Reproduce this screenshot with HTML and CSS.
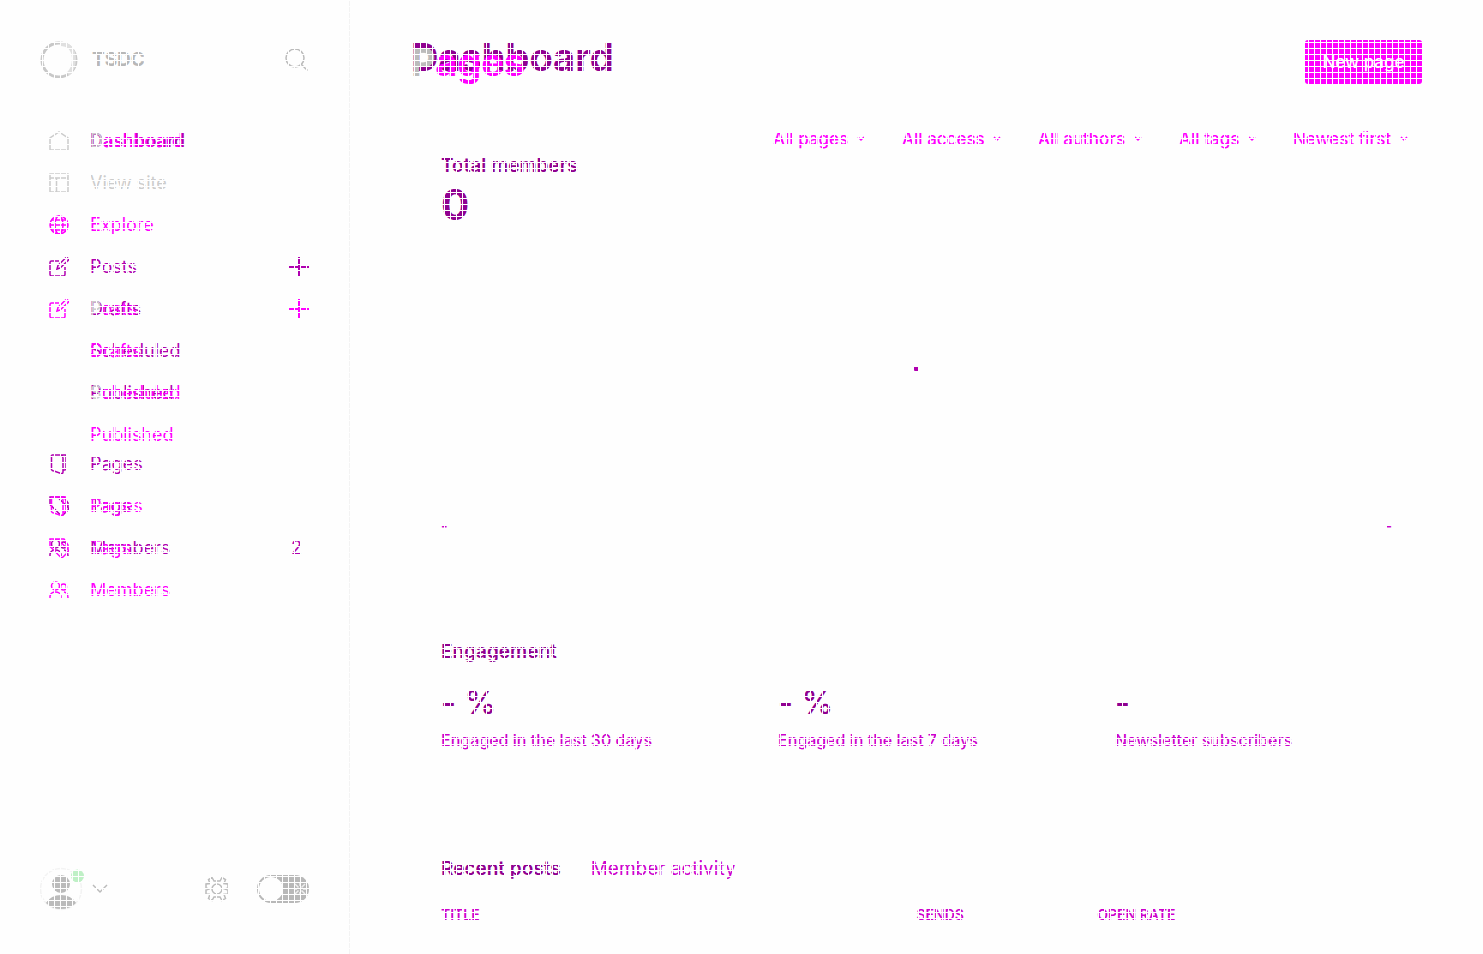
FILE: index.html
```html
<!DOCTYPE html>
<html lang="en">
<head>
<meta charset="utf-8">
<title>TSDC</title>
<link rel="stylesheet" href="styles.css">
</head>
<body>
<svg class="sprite" aria-hidden="true">
  <symbol id="i-posts" viewBox="0 0 20 20"><path d="M10 4H2.500Q1 4 1 5.500V17.500Q1 19 2.500 19H14.500Q16 19 16 17.500V10M8 12l1-3.500L16.500 1Q18 0 19 1.500T18.500 4L11 11z"/></symbol>
  <symbol id="i-plus" viewBox="0 0 20 20"><path d="M10 0V20M0 10H20" stroke-width="2"/></symbol>
  <symbol id="i-pages" viewBox="0 0 20 20"><path d="M2.500 1H17M2.500 1V15.500Q3 17 5 17L12 19.500Q14 20 14 18V4Q14 2 12 1M14 16h1.500Q17 16 17 14.500V1"/></symbol>
  <symbol id="i-tags" viewBox="0 0 20 20"><path d="M1 1H8.500L19 11.500Q20 13 19 14L14 19Q13 20 11.500 19L1 8.500zM5 1H15L19 7V11"/></symbol>
  <symbol id="i-members" viewBox="0 0 20 20"><path d="M1 18V16Q2 12 6.500 12T12 16V18M15 12Q19 12.500 19 18"/><circle cx="6.500" cy="6" r="4"/><circle cx="14.500" cy="7" r="3"/></symbol>
  <symbol id="i-chevron" viewBox="0 0 8 6"><path d="M1 1l3 3 3-3"/></symbol>
</svg>
<div class="app">
  <aside class="sidebar">
    <div class="brand">
      <svg class="logo" viewBox="0 0 38 38" aria-hidden="true"><circle cx="19" cy="19" r="17" stroke="#c8c8c8" stroke-width="3"/><path d="M20 3Q33 3 34 17Q34 28 28 33" stroke="#e0e0e0" stroke-width="4"/></svg>
      <span class="brand-name">TSDC</span>
      <button class="icon-button" aria-label="Search"><svg width="24" height="24" viewBox="0 0 24 24"><circle cx="10" cy="10" r="9"/><path d="M16.500 16.500l6 6"/></svg></button>
    </div>
    <div class="nav-stack">
      <nav class="nav nav-home" aria-label="Dashboard view">
        <ul class="group">
          <li><a class="item muted" href="#"><svg class="icon" viewBox="0 0 20 20"><path d="M1 19V7L10 1l9 6V19z"/></svg><span class="label current">Dashboard</span></a></li>
          <li><a class="item muted" href="#"><svg class="icon" viewBox="0 0 20 20"><path d="M1 1h18v18H1zM1 5h18M7.500 5V19"/></svg><span class="label">View site</span></a></li>
        </ul>
        <ul class="group">
          <li><a class="item" href="#"><svg class="icon"><use href="#i-posts"/></svg><span class="label">Posts</span><svg class="plus"><use href="#i-plus"/></svg></a></li>
          <li><a class="item sub" href="#"><span class="label">Drafts</span></a></li>
          <li><a class="item sub" href="#"><span class="label">Scheduled</span></a></li>
          <li><a class="item sub" href="#"><span class="label">Published</span></a></li>
        </ul>
        <ul class="group">
          <li><a class="item" href="#"><svg class="icon"><use href="#i-pages"/></svg><span class="label">Pages</span></a></li>
          <li><a class="item" href="#"><svg class="icon"><use href="#i-tags"/></svg><span class="label">Tags</span></a></li>
          <li><a class="item" href="#"><svg class="icon"><use href="#i-members"/></svg><span class="label">Members</span><span class="count">2</span></a></li>
        </ul>
      </nav>
      <nav class="nav nav-pages" aria-label="Pages view">
        <ul class="group first">
          <li><a class="item sub" href="#"><span class="label shared">Dashboard</span></a></li>
          <li class="spacer"></li>
          <li><a class="item" href="#"><svg class="icon" viewBox="0 0 20 20"><circle cx="10" cy="10" r="9"/><ellipse cx="10" cy="10" rx="4" ry="9"/><path d="M1 10h18M2.500 5h15M2.500 15h15"/></svg><span class="label">Explore</span></a></li>
        </ul>
        <ul class="group">
          <li><a class="item" href="#"><svg class="icon"><use href="#i-posts"/></svg><span class="label shared">Posts</span><svg class="plus"><use href="#i-plus"/></svg></a></li>
          <li><a class="item sub" href="#"><span class="label">Drafts</span></a></li>
          <li><a class="item sub" href="#"><span class="label shared">Scheduled</span></a></li>
          <li><a class="item sub" href="#"><span class="label">Published</span></a></li>
        </ul>
        <ul class="group">
          <li><a class="item" href="#"><svg class="icon"><use href="#i-pages"/></svg><span class="label">Pages</span></a></li>
          <li><a class="item" href="#"><svg class="icon"><use href="#i-tags"/></svg><span class="label">Tags</span></a></li>
          <li><a class="item" href="#"><svg class="icon"><use href="#i-members"/></svg><span class="label">Members</span></a></li>
        </ul>
      </nav>
    </div>
    <div class="account">
      <button class="profile" aria-label="Account menu">
        <svg width="44" height="44" viewBox="0 0 44 44"><circle cx="21" cy="22" r="20.500" stroke="#f3f3f3"/><circle cx="21" cy="17" r="9" class="solid"/><path d="M6 36Q11 28 21 28T36 36Q30 42 21 42T6 36z" class="solid"/><circle cx="37.500" cy="9" r="6.500" class="dot"/></svg>
        <svg width="16" height="10" viewBox="0 0 16 10"><path d="M1 1l7 7 7-7"/></svg>
      </button>
      <button class="icon-button" aria-label="Settings"><svg width="24" height="26" viewBox="0 0 24 26"><path d="M9 5L7 1.500 3.500 3.500 5 7.500 1 8v4l3 1-3 1v4l4 .500-1.500 4L7 24.500 9 21h6l2 3.500 3.500-2L19 18.500l4-.500v-4l-3-1 3-1V8l-4-.500 1.500-4L17 1.500 15 5z"/><circle cx="12" cy="13" r="5"/></svg></button>
      <label class="toggle"><input type="checkbox" aria-label="Night shift"><svg width="14" height="14" viewBox="0 0 14 14"><path d="M2 2l3.500 3.500M12 2L8.500 5.500M2 12l3.500-3.500M12 12L8.500 8.500M7 1v3M7 10v3M1 7h3M10 7h3"/></svg></label>
    </div>
  </aside>
  <main class="main">
    <header class="header">
      <div class="titles">
        <h1 class="title">Dashboard</h1>
        <h1 class="title title-pages">Pages</h1>
      </div>
      <button class="primary">New page</button>
    </header>
    <div class="filters">
      <div class="filter"><select aria-label="Type"><option>All pages</option></select><svg><use href="#i-chevron"/></svg></div>
      <div class="filter"><select aria-label="Access"><option>All access</option></select><svg><use href="#i-chevron"/></svg></div>
      <div class="filter"><select aria-label="Author"><option>All authors</option></select><svg><use href="#i-chevron"/></svg></div>
      <div class="filter"><select aria-label="Tag"><option>All tags</option></select><svg><use href="#i-chevron"/></svg></div>
      <div class="filter"><select aria-label="Sort"><option>Newest first</option></select><svg><use href="#i-chevron"/></svg></div>
    </div>
    <div class="content">
      <section>
        <h2 class="heading">Total members</h2>
        <div class="total">0</div>
        <div class="chart"><span class="point"></span></div>
        <div class="axis"><span>-</span><span>-</span></div>
      </section>
      <section class="engagement">
        <h2 class="heading">Engagement</h2>
        <div class="stats">
          <div><div class="value"><b>-</b> %</div><div class="caption">Engaged in the last 30 days</div></div>
          <div><div class="value"><b>-</b> %</div><div class="caption">Engaged in the last 7 days</div></div>
          <div><div class="value"><b>-</b></div><div class="caption">Newsletter subscribers</div></div>
        </div>
      </section>
      <section class="recent">
        <div class="tabs"><button class="tab active">Recent posts</button><button class="tab">Member activity</button></div>
        <table class="posts"><thead><tr><th class="col-title">TITLE</th><th class="col-sends">SENDS</th><th>OPEN RATE</th></tr></thead></table>
      </section>
    </div>
  </main>
</div>
</body>
</html>
```
FILE: styles.css
```css
* { box-sizing: border-box; }

body {
  margin: 0;
  background: #fefefe;
  font-family: Inter, "Liberation Sans", sans-serif;
  font-size: 18px;
  line-height: 24px;
  color: #900090;
}

/* fine white mesh laid over the whole view */
body::after {
  content: "";
  position: fixed;
  inset: 0;
  pointer-events: none;
  background:
    repeating-linear-gradient(to right, #fefefe 0 1px, transparent 1px 6px),
    repeating-linear-gradient(to bottom, #fefefe 0 1px, transparent 1px 6px);
}

h1, h2, ul { margin: 0; padding: 0; }
ul { list-style: none; }
a { color: inherit; text-decoration: none; }
button, select { padding: 0; border: 0; background: none; font: inherit; color: inherit; }
svg { display: block; fill: none; stroke: currentColor; stroke-width: 1.5; }
.sprite { width: 0; height: 0; position: absolute; }

.app { display: flex; min-height: 100vh; }

.sidebar {
  display: flex;
  flex-direction: column;
  flex: none;
  width: 350px;
  padding: 40px 40px 43px;
  border-right: 1px solid #f3f3f3;
  color: #bbb;
}

.brand { display: flex; align-items: center; gap: 14px; height: 40px; }
.logo { width: 38px; height: 38px; }
.brand-name { flex: 1; font-size: 19px; font-weight: 700; color: #b8b8b8; }

.nav-stack { display: grid; margin-top: 40px; }
.nav { grid-area: 1 / 1; }
.nav-home { color: #b000b0; }
.nav-pages { color: #f0f; }
.group { margin-bottom: 29px; }
.group:first-child { margin-bottom: 42px; }
.item { display: flex; align-items: center; height: 42px; padding-left: 9px; }
.sub { padding-left: 50px; }
.muted { color: #ccc; }
.spacer { height: 42px; }
.icon { flex: none; width: 20px; height: 20px; margin-right: 21px; }
.label { flex: 1; }
.current { font-weight: 600; color: #b000b0; }
.shared::first-letter { color: #ccc; }
.plus { width: 20px; height: 20px; }
.count { width: 18px; }

.account { display: flex; align-items: center; gap: 28px; margin-top: auto; }
.profile { display: flex; align-items: center; gap: 8px; margin-right: auto; }
.solid { fill: #bbb; stroke: none; }
.dot { fill: #bff0c6; stroke: none; }
.toggle {
  display: flex;
  align-items: center;
  gap: 10px;
  width: 52px;
  height: 28px;
  padding: 2px;
  border-radius: 14px;
  background: #b8b8b8;
  color: #eee;
}
.toggle input { appearance: none; width: 24px; height: 24px; margin: 0; border-radius: 12px; background: #fefefe; }

.main { flex: 1; padding: 40px 61px 24px; }
.header { display: flex; justify-content: space-between; height: 44px; }
.titles { display: grid; }
.title { grid-area: 1 / 1; font-size: 38px; line-height: 34px; font-weight: 700; }
.title-pages { padding-top: 5px; color: #f0f; }
.title-pages::first-letter { color: #bbb; }
.primary { width: 117px; border-radius: 3px; background: #f0f; color: #fefefe; font-size: 17px; font-weight: 500; }

.filters { display: flex; justify-content: flex-end; gap: 37px; margin: 43px 14px 0 0; color: #f0f; }
.filter { display: flex; align-items: center; gap: 8px; }
.filter select { appearance: none; font-size: 17px; line-height: 24px; font-weight: 500; }
.filter svg { width: 8px; height: 6px; }

.content { padding: 3px 30px 0; }
.heading { font-size: 19px; line-height: 24px; font-weight: 600; }
.total { margin-top: 6px; font-size: 42px; line-height: 42px; font-weight: 700; }
.chart { display: grid; place-items: center; height: 284px; }
.point { width: 5px; height: 5px; border-radius: 1px; background: #b000b0; }
.axis { display: flex; justify-content: space-between; margin-top: 4px; font-size: 14px; font-weight: 600; color: #cd00cd; }

.engagement { margin-top: 102px; }
.stats { display: grid; grid-template-columns: repeat(3, 1fr); gap: 60px; margin-top: 19px; }
.value { font-size: 32px; line-height: 40px; font-weight: 500; }
.value b { font-weight: 700; }
.caption { margin-top: 5px; font-size: 16px; font-weight: 500; color: #cd00cd; }

.recent { margin-top: 105px; }
.tabs { display: flex; gap: 30px; font-size: 19px; }
.tab { color: #cd00cd; }
.active { font-weight: 600; color: #900090; }
.posts { width: 100%; margin-top: 24px; border-collapse: collapse; table-layout: fixed; font-size: 14px; line-height: 20px; text-align: left; color: #cd00cd; }
.posts th { padding: 0; font-weight: 600; }
.col-title { width: 50%; }
.col-sends { width: 19%; }
```
